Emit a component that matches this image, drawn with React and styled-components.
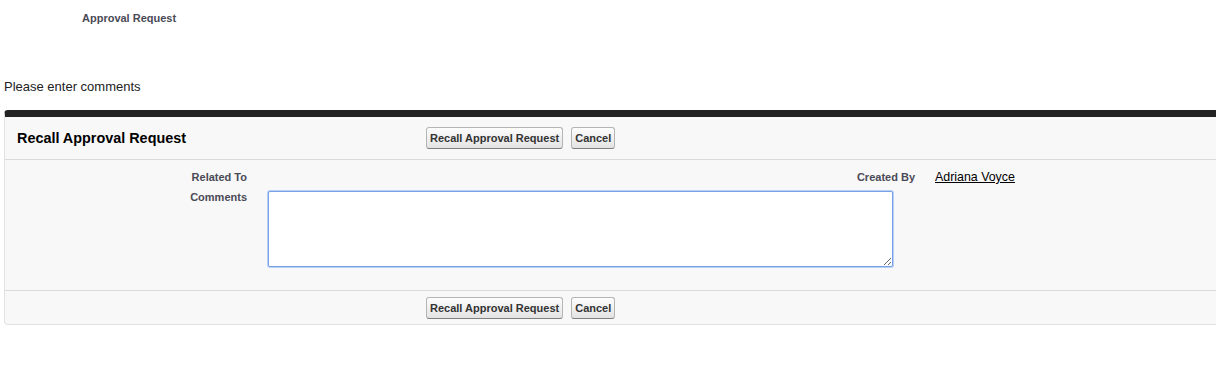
import React from 'react';
import styled, { createGlobalStyle } from 'styled-components';

const GlobalStyle = createGlobalStyle`
  html, body {
    margin: 0;
    padding: 0;
    background: #fff;
    overflow: hidden;
  }
  body {
    font-family: Arial, "Liberation Sans", Helvetica, sans-serif;
    color: #222;
  }
`;

const Page = styled.div`
  width: 1216px;
  height: 378px;
  overflow: hidden;
`;

const PageTitle = styled.div`
  padding: 12px 0 0 82px;
  height: 56px;
  font-size: 11px;
  font-weight: bold;
  color: #4a4a56;
`;

const Intro = styled.div`
  padding-left: 4px;
  height: 31px;
  font-size: 13px;
  color: #222;
  line-height: 15px;
  padding-top: 11px;
  box-sizing: content-box;
`;

const Block = styled.div`
  margin-left: 4px;
  width: 1260px;
  background: #f8f8f8;
  border-top: 7px solid #222;
  border-left: 1px solid #e0e3e5;
  border-bottom: 1px solid #e0e3e5;
  border-radius: 4px 0 0 4px;
`;

const Bar = styled.div`
  display: flex;
  align-items: center;
  height: ${p => p.$h}px;
  border-top: ${p => (p.$top ? '1px solid #dbdbdb' : 'none')};
`;

const Title = styled.h2`
  margin: 0;
  width: 421px;
  padding-left: 12px;
  box-sizing: border-box;
  font-size: 14.4px;
  font-weight: bold;
  color: #000;
`;

const Spacer = styled.div`
  width: 421px;
`;

const Buttons = styled.div`
  display: flex;
  gap: 8px;
`;

const Button = styled.button`
  font-family: Arial, "Liberation Sans", sans-serif;
  font-size: 11px;
  font-weight: bold;
  color: #333;
  height: 22px;
  padding: 0 3px;
  background: linear-gradient(#fdfdfd, #e3e3e3);
  border: 1px solid #b5b5b5;
  border-bottom-color: #7f7f7f;
  border-radius: 3px;
  cursor: pointer;
`;

const Body = styled.div`
  border-top: 1px solid #dbdbdb;
  height: 131px;
  padding-top: 9px;
  box-sizing: border-box;
  display: grid;
  grid-template-columns: 252px 420px 248px 1fr;
  grid-auto-rows: min-content;
  row-gap: 4px;
`;

const Label = styled.div`
  font-size: 11px;
  font-weight: bold;
  color: #4a4a56;
  text-align: right;
  padding-right: 10px;
  line-height: 16px;
`;

const Value = styled.div`
  padding-left: 10px;
  font-size: 12px;
  line-height: 16px;
  color: #000;
  grid-column: ${p => p.$span || 'auto'};
`;

const Link = styled.a`
  color: #000;
  text-decoration: underline;
  font-size: 12.4px;
`;

const Comments = styled.textarea`
  display: block;
  width: 625px;
  height: 76px;
  margin: 2px 0 0 1px;
  box-sizing: border-box;
  border: 1px solid #7aa0e6;
  border-radius: 2px;
  box-shadow: 0 0 0 1px #b9cff5;
  background: #fff;
  outline: none;
  resize: vertical;
  font-family: Arial, "Liberation Sans", sans-serif;
  font-size: 12px;
`;

export default function App() {
  return (
    <Page>
      <GlobalStyle />
      <PageTitle>Approval Request</PageTitle>
      <Intro>Please enter comments</Intro>
      <Block>
        <Bar $h={42}>
          <Title>Recall Approval Request</Title>
          <Buttons>
            <Button>Recall Approval Request</Button>
            <Button>Cancel</Button>
          </Buttons>
        </Bar>
        <Body>
          <Label>Related To</Label>
          <Value />
          <Label>Created By</Label>
          <Value>
            <Link href="#">Adriana Voyce</Link>
          </Value>
          <Label>Comments</Label>
          <Value $span="2 / 4">
            <Comments />
          </Value>
        </Body>
        <Bar $h={33} $top>
          <Spacer />
          <Buttons>
            <Button>Recall Approval Request</Button>
            <Button>Cancel</Button>
          </Buttons>
        </Bar>
      </Block>
    </Page>
  );
}
